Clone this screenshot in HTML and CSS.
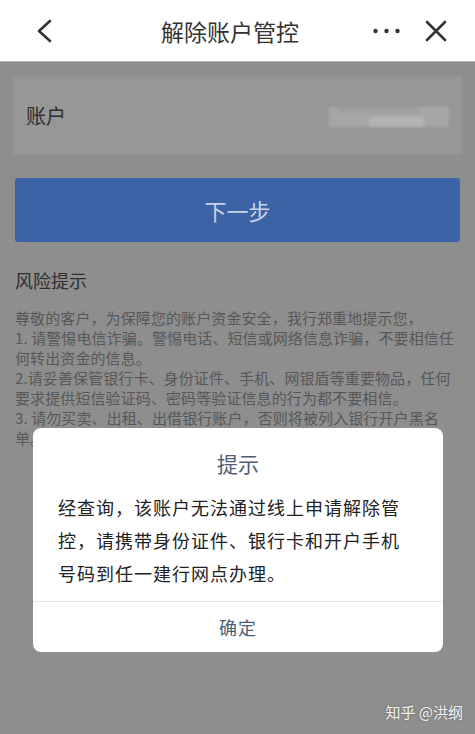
FILE: index.html
```html
<html>

<head>
    <meta charset="utf-8">
    <link rel="stylesheet" href="styles.css">
</head>

<body>

    <!-- top bar -->
    <div id="topbar">
        <div class="bar_left">
            <svg width="16" height="24" viewBox="0 0 16 24">
                <path d="M14 2 L3 12 L14 22" fill="none" stroke="#333" stroke-width="2.6" stroke-linecap="round" stroke-linejoin="round"/>
            </svg>
        </div>
        <div class="bar_title">解除账户管控</div>
        <div class="bar_right">
            <svg width="27" height="6" viewBox="0 0 27 6">
                <circle cx="2.5" cy="3" r="2.2" fill="#333"/>
                <circle cx="13.5" cy="3" r="2.2" fill="#333"/>
                <circle cx="24.5" cy="3" r="2.2" fill="#333"/>
            </svg>
            <svg width="22" height="22" viewBox="0 0 22 22">
                <path d="M2 2 L20 20 M20 2 L2 20" fill="none" stroke="#333" stroke-width="2.6" stroke-linecap="round"/>
            </svg>
        </div>
    </div>

    <!-- page under the mask -->
    <div id="page">
        <div class="acc_card">
            <span class="acc_label">账户</span>
            <div class="acc_num">
                <span class="blk1"></span>
                <span class="blk2"></span>
                <span class="blk3"></span>
            </div>
        </div>

        <div class="next_btn">下一步</div>

        <h3 class="risk_title">风险提示</h3>
        <p class="risk_text">尊敬的客户，为保障您的账户资金安全，我行郑重地提示您，<br>1. 请警惕电信诈骗。警惕电话、短信或网络信息诈骗，不要相信任<br>何转出资金的信息。<br>2.请妥善保管银行卡、身份证件、手机、网银盾等重要物品，任何<br>要求提供短信验证码、密码等验证信息的行为都不要相信。<br>3. 请勿买卖、出租、出借银行账户，否则将被列入银行开户黑名<br>单。</p>
    </div>

    <!-- dialog -->
    <div id="dialog">
        <div class="dlg_title">提示</div>
        <div class="dlg_body">经查询，该账户无法通过线上申请解除管控，请携带身份证件、银行卡和开户手机号码到任一建行网点办理。</div>
        <div class="dlg_btn">确定</div>
    </div>

    <div class="watermark">知乎 @洪纲</div>

</body>
</html>
```

FILE: styles.css
```css
body {
    margin: 0;
    width: 475px;
    height: 734px;
    overflow: hidden;
    position: relative;
    background-color: #8e8e8e;
    font-family: "Noto Sans CJK SC", "Noto Sans", sans-serif;
}

#topbar {
    height: 61px;
    background-color: #fff;
    display: flex;
    align-items: center;
    border-bottom: 1px solid #b5b5b5;
}

.bar_left {
    width: 90px;
    padding-left: 36px;
    box-sizing: border-box;
    display: flex;
    align-items: center;
}

.bar_title {
    flex: 1;
    text-align: center;
    font-size: 23px;
    color: #333;
}

.bar_right {
    width: 105px;
    padding-right: 28px;
    box-sizing: border-box;
    display: flex;
    align-items: center;
    justify-content: flex-end;
    gap: 25px;
}

#page {
    padding: 15px 15px 0 15px;
}

.acc_card {
    height: 77px;
    margin: 0 -2px;
    padding: 0 13px;
    background-color: #979797;
    display: flex;
    align-items: center;
    justify-content: space-between;
    box-shadow: 0 0 6px rgba(150, 150, 150, 0.6);
}

.acc_label {
    font-size: 20px;
    color: #2e2e2e;
}

.acc_num {
    width: 120px;
    height: 22px;
    position: relative;
    filter: blur(1.5px);
}

.acc_num span {
    position: absolute;
    display: block;
}

.blk1 {
    left: 0;
    top: 2px;
    width: 120px;
    height: 20px;
    background-color: #a6a6a6;
}

.blk2 {
    left: 40px;
    top: 12px;
    width: 55px;
    height: 10px;
    background-color: #b4b4b4;
}

.blk3 {
    left: 10px;
    top: 2px;
    width: 80px;
    height: 6px;
    background-color: #9e9e9e;
}

.next_btn {
    margin-top: 24px;
    height: 64px;
    border-radius: 3px;
    background-color: #3b63a6;
    color: #c9d2e4;
    font-size: 22px;
    display: flex;
    align-items: center;
    justify-content: center;
}

.risk_title {
    margin: 26px 0 0 0;
    font-size: 18px;
    font-weight: normal;
    line-height: 24px;
    color: #2f2f2f;
}

.risk_text {
    margin: 16px 0 0 0;
    white-space: nowrap;
    font-size: 15px;
    line-height: 20px;
    letter-spacing: 0.1px;
    color: #575757;
}

#dialog {
    position: absolute;
    left: 33px;
    top: 428px;
    width: 410px;
    background-color: #fff;
    border-radius: 8px;
}

.dlg_title {
    padding-top: 20px;
    text-align: center;
    font-size: 21px;
    line-height: 30px;
    color: #4f5d72;
}

.dlg_body {
    margin-top: 13px;
    padding: 0 35px 11px 25px;
    font-size: 18px;
    letter-spacing: 1px;
    line-height: 33px;
    color: #222;
}

.dlg_btn {
    height: 50px;
    border-top: 1px solid #e6e6e6;
    display: flex;
    align-items: center;
    justify-content: center;
    font-size: 18px;
    letter-spacing: 1px;
    color: #4b5e7a;
}

.watermark {
    position: absolute;
    right: 12px;
    bottom: 12px;
    font-size: 15px;
    color: #f4f4f4;
    text-shadow: 0 0 2px rgba(60, 60, 60, 0.6);
}
```
